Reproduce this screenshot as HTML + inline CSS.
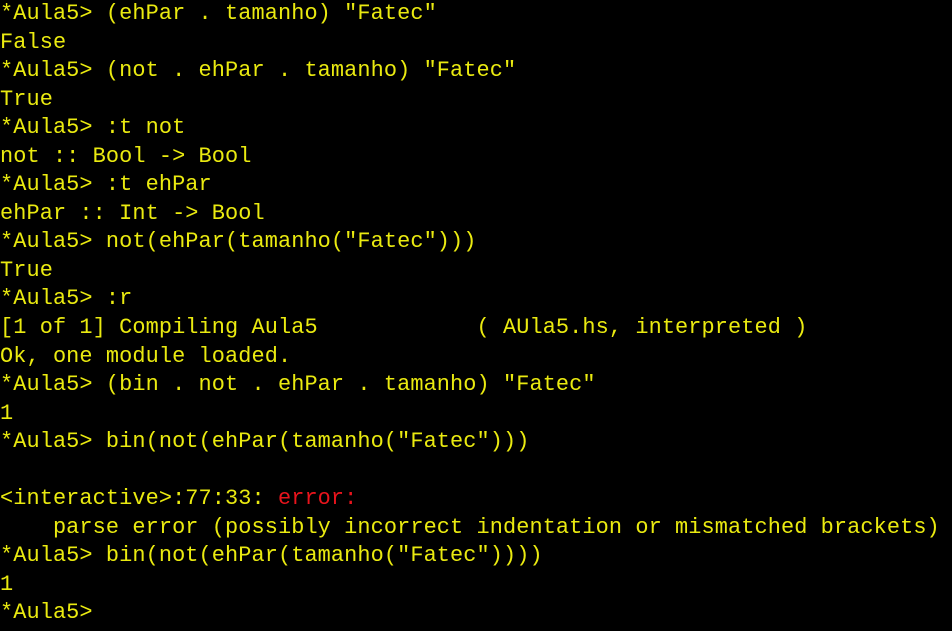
<!DOCTYPE html>
<html><head><meta charset="utf-8"><style>
html,body{margin:0;padding:0;background:#000;width:952px;height:631px;overflow:hidden}
pre{margin:0;position:absolute;left:0;top:0px;font-family:"Liberation Mono","DejaVu Sans Mono",monospace;font-size:21.9px;line-height:28.55px;color:#eaea10;letter-spacing:0.1px}
.r{color:#e8141c}
</style></head><body><pre>*Aula5&gt; (ehPar . tamanho) "Fatec"
False
*Aula5&gt; (not . ehPar . tamanho) "Fatec"
True
*Aula5&gt; :t not
not :: Bool -&gt; Bool
*Aula5&gt; :t ehPar
ehPar :: Int -&gt; Bool
*Aula5&gt; not(ehPar(tamanho("Fatec")))
True
*Aula5&gt; :r
[1 of 1] Compiling Aula5            ( AUla5.hs, interpreted )
Ok, one module loaded.
*Aula5&gt; (bin . not . ehPar . tamanho) "Fatec"
1
*Aula5&gt; bin(not(ehPar(tamanho("Fatec")))

&lt;interactive&gt;:77:33: <span class="r">error:</span>
    parse error (possibly incorrect indentation or mismatched brackets)
*Aula5&gt; bin(not(ehPar(tamanho("Fatec"))))
1
*Aula5&gt;</pre></body></html>
